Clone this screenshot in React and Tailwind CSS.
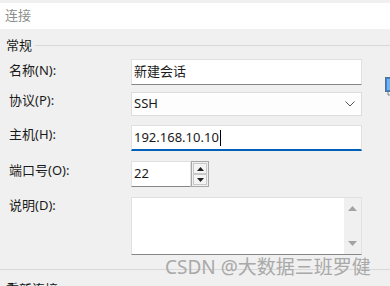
import React from 'react';

const FONT = { fontFamily: '"Segoe UI", "Noto Sans", "Noto Sans CJK SC", sans-serif' };

const Label = ({ children, className = '' }) => (
  <div className={`w-[131px] shrink-0 pl-[9px] text-[13px] leading-[20px] text-[#1a1a1a] ${className}`}>
    {children}
  </div>
);

const TextBox = ({ value, focused, className = '' }) => (
  <div
    className={`relative flex items-center h-[26px] bg-white border border-[#e1e1e1] pl-[2px] text-[13px] text-[#1a1a1a] ${
      focused ? 'border-b-2 border-b-[#005fb8]' : 'border-b-[#868686]'
    } ${className}`}
  >
    <span>{value}</span>
    {focused && <span className="ml-px h-[16px] w-px bg-black" />}
  </div>
);

const Spinner = () => (
  <div className="flex h-[26px] w-[18px] flex-col border border-[#a8a8a8] bg-[#f0f0f0] p-px">
    <div className="flex flex-1 items-center justify-center border border-[#c8c8c8] bg-[#f4f4f4]">
      <svg width="7" height="4" viewBox="0 0 7 4">
        <path d="M0 4 L3.5 0 L7 4 Z" fill="#222" />
      </svg>
    </div>
    <div className="flex flex-1 items-center justify-center border border-[#c8c8c8] bg-[#f4f4f4]">
      <svg width="7" height="4" viewBox="0 0 7 4">
        <path d="M0 0 L3.5 4 L7 0 Z" fill="#222" />
      </svg>
    </div>
  </div>
);

export default function App() {
  return (
    <div className="relative h-[286px] w-[390px] overflow-hidden bg-[#f0f0f0]" style={FONT}>
      <div className="pt-[3px]">
        <div className="flex h-[26px] items-center bg-white pl-[5px] text-[13px] text-[#8c8c8c]">连接</div>
      </div>

      <div className="mt-[6px] flex h-[20px] items-center">
        <span className="pl-[6px] pr-[3px] text-[13px] leading-[20px] text-[#1a1a1a]">常规</span>
        <div className="h-px flex-1 bg-[#d8d8d8]" />
      </div>

      <div className="flex flex-col pr-[28px]">
        <div className="mt-[4px] flex items-start">
          <Label className="mt-px">名称(N):</Label>
          <TextBox value="新建会话" className="flex-1" />
        </div>

        <div className="mt-[7px] flex items-start">
          <Label className="-mt-[2px]">协议(P):</Label>
          <div className="flex h-[24px] flex-1 items-center justify-between border border-[#dcdcdc] bg-[#fdfdfd] pl-[2px] pr-[6px] text-[13px] text-[#1a1a1a]">
            <span>SSH</span>
            <svg width="10" height="6" viewBox="0 0 10 6">
              <path d="M0.5 0.5 L5 5 L9.5 0.5" fill="none" stroke="#555" strokeWidth="1" />
            </svg>
          </div>
        </div>

        <div className="mt-[9px] flex items-start">
          <Label className="-mt-px">主机(H):</Label>
          <TextBox value="192.168.10.10" focused className="flex-1" />
        </div>

        <div className="mt-[10px] flex items-start">
          <Label className="-mt-px">端口号(O):</Label>
          <TextBox value="22" className="w-[60px]" />
          <Spinner />
        </div>

        <div className="mt-[10px] flex items-start">
          <Label className="-mt-[2px]">说明(D):</Label>
          <div className="flex h-[58px] flex-1 border border-[#e1e1e1] border-b-[#868686] bg-white">
            <div className="flex-1" />
            <div className="flex w-[17px] flex-col items-center justify-between bg-[#f0f0f0] py-[8px]">
              <svg width="9" height="5" viewBox="0 0 9 5">
                <path d="M0 5 L4.5 0 L9 5 Z" fill="#a3a3a3" />
              </svg>
              <svg width="9" height="5" viewBox="0 0 9 5">
                <path d="M0 0 L4.5 5 L9 0 Z" fill="#a3a3a3" />
              </svg>
            </div>
          </div>
        </div>
      </div>

      <div className="mt-[14px] h-px bg-[#d8d8d8]" />
      <div className="pl-[6px] pt-[9px] text-[13px] leading-[20px] text-[#1a1a1a]">重新连接</div>

      <svg className="absolute left-[385px] top-[77px]" width="8" height="20" viewBox="0 0 8 20">
        <rect x="0.5" y="0.5" width="7" height="14" fill="#3a86d8" stroke="#5a6f8a" />
        <rect x="2" y="2" width="6" height="11" fill="#6fb4f0" />
        <path d="M3 15 L3 18 L8 18" fill="none" stroke="#7a8595" />
      </svg>

      <div className="absolute left-[165px] top-[256px] text-[19px] leading-[22px] text-[#a9a9a9] whitespace-nowrap">
        CSDN @大数据三班罗健
      </div>
    </div>
  );
}
